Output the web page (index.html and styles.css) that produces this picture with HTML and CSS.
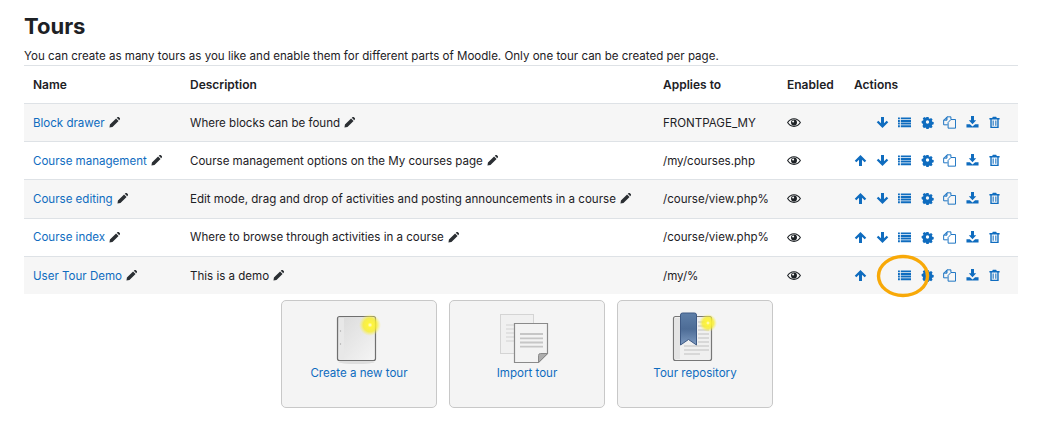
FILE: index.html
```html
<!DOCTYPE html>
<html lang="en">
<head>
<meta charset="utf-8">
<title>Tours</title>
<link rel="stylesheet" href="styles.css">
</head>
<body>
<svg class="defs" width="0" height="0" aria-hidden="true">
  <defs>
    <symbol id="i-pencil" viewBox="0 0 14 14"><path d="M1.200 9.600 9 1.800l3.200 3.200-7.800 7.800L.6 13.400Z M9.900 1 11 0c.5-.4 1-.4 1.400 0L14 1.600c.4.4.4 1 0 1.400l-1 1.100Z"/></symbol>
    <symbol id="i-eye" viewBox="0 0 16 12"><path fill-rule="evenodd" d="M8 1C4.600 1 1.700 2.900 0 6c1.700 3.100 4.600 5 8 5s6.300-1.900 8-5C14.300 2.900 11.400 1 8 1Zm0 1.200c2.800 0 5.200 1.500 6.600 3.800-1.400 2.300-3.800 3.800-6.600 3.800S2.800 8.300 1.400 6C2.800 3.700 5.200 2.200 8 2.200Z"/><path fill-rule="evenodd" d="M8 2.600a3.400 3.400 0 1 1 0 6.800 3.400 3.400 0 0 1 0-6.800ZM7 3.700a1.200 1.200 0 1 0 0 2.400 1.200 1.200 0 0 0 0-2.400Z"/></symbol>
    <symbol id="i-up" viewBox="0 0 14 14"><path d="M7 1.200 13.200 7.300 11.500 9 8.600 6.200V13H5.400V6.200L2.500 9 .8 7.300Z"/></symbol>
    <symbol id="i-down" viewBox="0 0 14 14"><path d="M7 12.800.8 6.700 2.500 5l2.900 2.800V1h3.200v6.800L11.500 5l1.700 1.700Z"/></symbol>
    <symbol id="i-list" viewBox="0 0 14 14"><path d="M0 1.500h2v2.100H0Zm3 0h11v2.100H3ZM0 4.300h2v2.100H0Zm3 0h11v2.100H3ZM0 7.100h2v2.100H0Zm3 0h11v2.100H3ZM0 9.900h2V12H0Zm3 0h11V12H3Z"/></symbol>
    <symbol id="i-gear" viewBox="0 0 14 14"><path fill-rule="evenodd" d="M5.700 1h2.600l.4 1.700 1.100.5 1.500-.9 1.800 1.800-.9 1.500.5 1.100 1.700.4v2.600l-1.700.4-.5 1.100.9 1.500-1.800 1.800-1.500-.9-1.100.5-.4 1.700H5.700l-.4-1.700-1.100-.5-1.500.9L.9 11.800l.9-1.500-.5-1.100L0 8.300V5.700l1.700-.4.5-1.100-.9-1.500 1.800-1.800 1.500.9 1.100-.5ZM7 5a2 2 0 1 0 0 4 2 2 0 0 0 0-4Z" transform="translate(.7 .2) scale(.9)"/></symbol>
    <symbol id="i-copy" viewBox="0 0 14 14"><path fill="none" stroke="currentColor" stroke-width="1" d="M8.500 3.500V.9H4.300L.7 4.500V9.500H5M4.300.9v3.600H.7M8.500 3.800h5v9.300h-8V7Z"/><path d="M2 3.700 4 1.600v2.100Z"/></symbol>
    <symbol id="i-download" viewBox="0 0 14 14"><path d="M5.400 0h3.200v4.700H11L7 8.800 3 4.700h2.400ZM.5 8.800h3.700L7 11.300l2.800-2.500h3.700v3.700H.5Z"/></symbol>
    <symbol id="i-trash" viewBox="0 0 14 14"><path fill-rule="evenodd" d="M5.200.8h3.600l.7 1.400H12.500v1.500h-1V13h-9V3.700h-1V2.200h3ZM4 3.700v8h6v-8ZM5 4.800h1.100v5.800H5Zm2.900 0H9v5.800H7.900Z"/></symbol>
    <radialGradient id="glow"><stop offset="0" stop-color="#fffde0"/><stop offset=".22" stop-color="#fff53c"/><stop offset=".62" stop-color="#f8ee2c" stop-opacity=".8"/><stop offset="1" stop-color="#f8ee60" stop-opacity="0"/></radialGradient>
    <linearGradient id="pagefill" x1="0" y1="0" x2="1" y2="1"><stop offset="0" stop-color="#dadada"/><stop offset="1" stop-color="#f5f5f5"/></linearGradient>
    <linearGradient id="ribbon" x1="0" y1="0" x2="0" y2="1"><stop offset="0" stop-color="#5e7fa8"/><stop offset=".5" stop-color="#4d6c96"/><stop offset="1" stop-color="#7d9ac0"/></linearGradient>
  </defs>
</svg>

<main class="page">
  <h1 class="title">Tours</h1>
  <p class="intro">You can create as many tours as you like and enable them for different parts of Moodle. Only one tour can be created per page.</p>

  <div class="table-wrap">
    <table class="tours">
      <colgroup>
        <col class="c-name"><col class="c-desc"><col class="c-applies"><col class="c-enabled"><col class="c-actions">
      </colgroup>
      <thead>
        <tr><th>Name</th><th>Description</th><th>Applies to</th><th>Enabled</th><th>Actions</th></tr>
      </thead>
      <tbody>
        <tr>
          <td><a href="#">Block drawer</a> <svg class="pencil"><use href="#i-pencil"/></svg></td>
          <td>Where blocks can be found <svg class="pencil"><use href="#i-pencil"/></svg></td>
          <td>FRONTPAGE_MY</td>
          <td><svg class="eye"><use href="#i-eye"/></svg></td>
          <td><div class="actions">
            <span class="slot"></span>
            <svg class="act"><use href="#i-down"/></svg><svg class="act"><use href="#i-list"/></svg><svg class="act"><use href="#i-gear"/></svg><svg class="act"><use href="#i-copy"/></svg><svg class="act"><use href="#i-download"/></svg><svg class="act"><use href="#i-trash"/></svg>
          </div></td>
        </tr>
        <tr>
          <td><a href="#">Course management</a> <svg class="pencil"><use href="#i-pencil"/></svg></td>
          <td>Course management options on the My courses page <svg class="pencil"><use href="#i-pencil"/></svg></td>
          <td>/my/courses.php</td>
          <td><svg class="eye"><use href="#i-eye"/></svg></td>
          <td><div class="actions">
            <svg class="act"><use href="#i-up"/></svg><svg class="act"><use href="#i-down"/></svg><svg class="act"><use href="#i-list"/></svg><svg class="act"><use href="#i-gear"/></svg><svg class="act"><use href="#i-copy"/></svg><svg class="act"><use href="#i-download"/></svg><svg class="act"><use href="#i-trash"/></svg>
          </div></td>
        </tr>
        <tr>
          <td><a href="#">Course editing</a> <svg class="pencil"><use href="#i-pencil"/></svg></td>
          <td>Edit mode, drag and drop of activities and posting announcements in a course <svg class="pencil"><use href="#i-pencil"/></svg></td>
          <td>/course/view.php%</td>
          <td><svg class="eye"><use href="#i-eye"/></svg></td>
          <td><div class="actions">
            <svg class="act"><use href="#i-up"/></svg><svg class="act"><use href="#i-down"/></svg><svg class="act"><use href="#i-list"/></svg><svg class="act"><use href="#i-gear"/></svg><svg class="act"><use href="#i-copy"/></svg><svg class="act"><use href="#i-download"/></svg><svg class="act"><use href="#i-trash"/></svg>
          </div></td>
        </tr>
        <tr>
          <td><a href="#">Course index</a> <svg class="pencil"><use href="#i-pencil"/></svg></td>
          <td>Where to browse through activities in a course <svg class="pencil"><use href="#i-pencil"/></svg></td>
          <td>/course/view.php%</td>
          <td><svg class="eye"><use href="#i-eye"/></svg></td>
          <td><div class="actions">
            <svg class="act"><use href="#i-up"/></svg><svg class="act"><use href="#i-down"/></svg><svg class="act"><use href="#i-list"/></svg><svg class="act"><use href="#i-gear"/></svg><svg class="act"><use href="#i-copy"/></svg><svg class="act"><use href="#i-download"/></svg><svg class="act"><use href="#i-trash"/></svg>
          </div></td>
        </tr>
        <tr>
          <td><a href="#">User Tour Demo</a> <svg class="pencil"><use href="#i-pencil"/></svg></td>
          <td>This is a demo <svg class="pencil"><use href="#i-pencil"/></svg></td>
          <td>/my/%</td>
          <td><svg class="eye"><use href="#i-eye"/></svg></td>
          <td><div class="actions">
            <svg class="act"><use href="#i-up"/></svg><span class="slot"></span><svg class="act"><use href="#i-list"/></svg><svg class="act"><use href="#i-gear"/></svg><svg class="act"><use href="#i-copy"/></svg><svg class="act"><use href="#i-download"/></svg><svg class="act"><use href="#i-trash"/></svg>
          </div></td>
        </tr>
      </tbody>
    </table>
    <svg class="highlight" viewBox="0 0 54 44"><ellipse cx="27" cy="22" rx="24.500" ry="19.500" fill="none" stroke="#f8a908" stroke-width="3.400"/></svg>
  </div>

  <div class="cards">
    <a class="card" href="#">
      <svg class="card-icon" viewBox="0 0 64 52">
        <ellipse cx="29.500" cy="50" rx="18" ry="2" fill="#dedede"/>
        <rect x="10.500" y="4.500" width="38" height="44" rx="2" fill="url(#pagefill)" stroke="#6f6f6f" stroke-width="1.200"/>
        <rect x="12" y="6" width="5" height="41" fill="#e8e8e8"/>
        <circle cx="13.500" cy="19" r=".7" fill="#aaa"/><circle cx="13.500" cy="32" r=".7" fill="#aaa"/>
        <circle cx="43" cy="13" r="11" fill="url(#glow)"/>
      </svg>
      <span class="label">Create a new tour</span>
    </a>
    <a class="card" href="#">
      <svg class="card-icon" viewBox="0 0 64 52">
        <rect x="5.500" y="2.500" width="33" height="39" fill="#f0f0f0" stroke="#d4d4d4"/>
        <path d="M11 13h14M11 17h14M11 21h14M11 25h14M11 29h14" stroke="#dcdcdc" stroke-width="1.500"/>
        <path d="M19.500 11.500h33v30l-9 9h-24Z" fill="#f3f3f3" stroke="#8a8a8a" stroke-width="1.200"/>
        <path d="M25 22h23M25 26.300h23M25 30.500h23M25 34.700h23" stroke="#c6c6c6" stroke-width="1.800"/>
        <path d="M52.500 41.500l-9 9v-7q0-2 2-2Z" fill="#adadad" stroke="#8a8a8a"/>
      </svg>
      <span class="label">Import tour</span>
    </a>
    <a class="card" href="#">
      <svg class="card-icon" viewBox="0 0 64 52">
        <rect x="10.500" y="4.500" width="38" height="44" rx="2" fill="#f0f0f0" stroke="#777" stroke-width="1.200"/>
        <rect x="12" y="6" width="5" height="41" fill="#e4e4e4"/>
        <path d="M35 10h11M35 14h11M35 18h11M35 22h11M35 26h11M35 30h11M21 34h25M21 38h25M21 42h16" stroke="#cfcfcf" stroke-width="1.300"/>
        <path d="M17.500 3q0-2 2-2h12q2 0 2 2v30l-8-5.500-8 5.500Z" fill="url(#ribbon)" stroke="#3e5a85" stroke-width="1"/>
        <circle cx="45" cy="11" r="9" fill="url(#glow)"/>
      </svg>
      <span class="label">Tour repository</span>
    </a>
  </div>
</main>
</body>
</html>
```

FILE: styles.css
```css
* { box-sizing: border-box; }
html, body { margin: 0; padding: 0; background: #fff; }
body {
  font-family: Inter, "Liberation Sans", sans-serif;
  font-size: 11.550px;
  color: #1d2125;
  overflow: hidden;
}
.defs { position: absolute; }
.page { padding: 12px 22px 0 24px; }
.title { margin: 0; font-size: 22px; line-height: 28px; font-weight: 700; }
.intro { margin: 8px 0 0; line-height: 17px; height: 17px; white-space: nowrap; }

.table-wrap { position: relative; }
.tours { width: 100%; border-collapse: collapse; table-layout: fixed; border-top: 1px solid #dee2e6; }
.c-name { width: 157px; }
.c-desc { width: 473px; }
.c-applies { width: 124px; }
.c-enabled { width: 67px; }
.tours th {
  height: 38px; padding: 0 9px; text-align: left; font-weight: 600; font-size: 12px;
  border-bottom: 1px solid #dee2e6;
}
.tours td { height: 38.200px; padding: 0 9px; border-bottom: 1px solid #dee2e6; white-space: nowrap; }
.tours tbody tr:nth-child(odd) td { background: #f6f6f6; }
.tours tbody tr:last-child td { border-bottom: 0; }
a { color: #0f6cbf; text-decoration: none; }
.pencil { width: 11px; height: 11px; fill: #2b2f33; vertical-align: -1.500px; margin-left: 1px; }
.eye { width: 14px; height: 11px; fill: #1d2125; display: block; }
.actions { display: flex; justify-content: flex-end; gap: 9.400px; color: #0f6cbf; padding-right: 8px; }
.act { width: 13px; height: 13px; fill: #0f6cbf; flex: none; }
.slot { width: 13px; height: 13px; flex: none; }
.highlight { position: absolute; left: 852px; top: 189px; width: 54px; height: 44px; }

.cards { display: flex; justify-content: center; gap: 12px; margin-top: 6px; padding-left: 12px; }
.card {
  width: 156px; height: 108px; padding-top: 11px;
  display: flex; flex-direction: column; align-items: center;
  background: #f4f4f4; border: 1px solid #c8c8c8; border-radius: 5px;
}
.card-icon { width: 64px; height: 52px; display: block; flex: none; }
.label { margin-top: 1px; line-height: 17px; }
```
